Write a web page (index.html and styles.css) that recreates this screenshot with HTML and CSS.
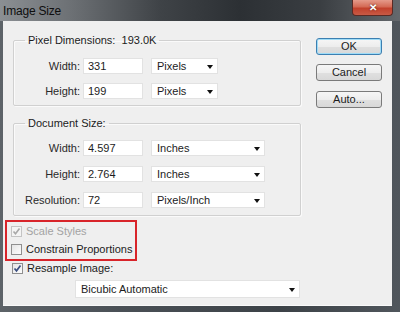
FILE: index.html
```
<!DOCTYPE html>
<html>
<head>
<meta charset="UTF-8">
<title>Image Size</title>
<link rel="stylesheet" href="styles.css">
</head>
<body>
  <div class="window">
    <div class="titlebar">
      <div class="title">Image Size</div>
      <div class="close">&#x2715;</div>
    </div>
    <div class="client">
      <div class="main">
        <fieldset class="group group-pixels">
          <legend>Pixel Dimensions:&nbsp; 193.0K</legend>
          <div class="rows">
            <div class="row">
              <label>Width:</label>
              <input type="text" value="331">
              <div class="select small">Pixels</div>
            </div>
            <div class="row">
              <label>Height:</label>
              <input type="text" value="199">
              <div class="select small">Pixels</div>
            </div>
          </div>
        </fieldset>

        <fieldset class="group group-doc">
          <legend>Document Size:</legend>
          <div class="rows">
            <div class="row">
              <label>Width:</label>
              <input type="text" value="4.597">
              <div class="select">Inches</div>
            </div>
            <div class="row">
              <label>Height:</label>
              <input type="text" value="2.764">
              <div class="select">Inches</div>
            </div>
            <div class="row">
              <label>Resolution:</label>
              <input type="text" value="72">
              <div class="select">Pixels/Inch</div>
            </div>
          </div>
        </fieldset>

        <!-- highlighted options -->
        <div class="highlight">
          <div class="check disabled">
            <span class="box"><svg width="9" height="9" viewBox="0 0 9 9"><path d="M1.5 4.5 L3.5 6.8 L7.5 1.5" fill="none" stroke="#a8a8a8" stroke-width="1.6"/></svg></span>
            <span>Scale Styles</span>
          </div>
          <div class="check">
            <span class="box"></span>
            <span>Constrain Proportions</span>
          </div>
        </div>

        <div class="check resample">
          <span class="box"><svg width="9" height="9" viewBox="0 0 9 9"><path d="M1.5 4.5 L3.5 6.8 L7.5 1.5" fill="none" stroke="#3b4f80" stroke-width="1.7"/></svg></span>
          <span>Resample Image:</span>
        </div>

        <div class="select wide">Bicubic Automatic</div>
      </div>

      <div class="side">
        <button class="btn default">OK</button>
        <button class="btn cancel">Cancel</button>
        <button class="btn auto">Auto...</button>
      </div>
    </div>
  </div>
</body>
</html>
```

FILE: styles.css
```
body {
  margin: 0;
  width: 400px;
  height: 312px;
  overflow: hidden;
  font-family: "Liberation Sans", Arial, sans-serif;
  font-size: 11px;
  color: #1c1c1c;
}

.window {
  display: flex;
  flex-direction: column;
  height: 312px;
  background: linear-gradient(90deg, #5d6368 0%, #4a5056 30%, #3c4247 70%, #50565c 100%);
}

.titlebar {
  height: 21px;
  display: flex;
  justify-content: space-between;
  align-items: flex-start;
  background: linear-gradient(90deg, #8b8f93 0%, #6c7074 18%, #3f4347 40%, #2c3034 60%, #3a3e42 80%, #65696d 100%);
}

.title {
  padding: 4px 0 0 3px;
  font-size: 12px;
  letter-spacing: -0.2px;
  color: #0e0e0e;
}

.close {
  width: 39px;
  height: 15px;
  margin-right: 7px;
  border: 1px solid #5a2a24;
  border-top: none;
  border-radius: 0 0 4px 4px;
  background: linear-gradient(#e59a8a 0%, #d46a55 45%, #c2412c 55%, #c85a45 100%);
  color: #fff;
  font-size: 10px;
  font-weight: bold;
  text-align: center;
  line-height: 15px;
  text-shadow: 0 0 2px #4a1a14;
}

.client {
  flex: 1;
  margin: 0 8px 6px 3px;
  padding: 13px 0 0 2px;
  background: #efefef;
  border-bottom: 1px solid #fafafa;
  display: flex;
}

.main {
  width: 296px;
}

.group {
  margin: 0 0 0 8px;
  width: 288px;
  box-sizing: border-box;
  padding: 11px 0 6px 0;
  border: 1px solid #d0d0d0;
  border-radius: 2px;
  box-shadow: inset 1px 1px 0 #fafafa, 1px 1px 0 #fafafa;
}

.group legend {
  margin-left: 11px;
  padding: 0 3px;
  line-height: 13px;
  color: #1c1c1c;
}

.group-doc {
  margin-top: 11px;
  padding: 10px 0 7px 0;
}

.rows {
  display: flex;
  flex-direction: column;
  gap: 9px;
}

.group-doc .rows {
  gap: 10px;
}

.row {
  display: flex;
  align-items: center;
  height: 16px;
}

.row label {
  width: 66px;
  text-align: right;
  color: #2a2a2a;
}

.row input {
  width: 60px;
  height: 16px;
  box-sizing: border-box;
  margin: 0 0 0 3px;
  padding: 0 4px;
  border: 1px solid #e2e2e2;
  background: #fff;
  font-family: "Liberation Sans", Arial, sans-serif;
  font-size: 11px;
  color: #1c1c1c;
  outline: none;
}

.select {
  position: relative;
  width: 114px;
  height: 16px;
  box-sizing: border-box;
  margin-left: 8px;
  padding-left: 5px;
  border: 1px solid #e2e2e2;
  background: #fff;
  line-height: 14px;
  color: #1c1c1c;
}

/* small arrow on the right */
.select::after {
  content: '';
  position: absolute;
  right: 4px;
  top: 6px;
  border-left: 3px solid transparent;
  border-right: 3px solid transparent;
  border-top: 4px solid #111;
}

.select.small {
  width: 67px;
}

.select.wide {
  width: 225px;
  height: 18px;
  margin: 5px 0 0 70px;
  line-height: 16px;
}

.select.wide::after {
  top: 7px;
}

.highlight {
  width: 132px;
  height: 41px;
  box-sizing: border-box;
  margin-top: 4px;
  padding-left: 4px;
  border: 2px solid #d8242a;
}

.check {
  display: flex;
  align-items: center;
  gap: 4px;
  height: 18px;
}

.check .box {
  width: 11px;
  height: 11px;
  box-sizing: border-box;
  border: 1px solid #8f8f8f;
  background: linear-gradient(135deg, #e4e4e4, #fdfdfd);
  display: flex;
  align-items: center;
  justify-content: center;
}

.check.disabled {
  color: #a3a3a3;
}

.check.disabled .box {
  border-color: #c4c4c4;
  background: #f4f4f4;
}

.check.resample {
  height: 14px;
  margin-left: 7px;
}

.side {
  display: flex;
  flex-direction: column;
  margin-left: 15px;
  padding-top: 4px;
}

.btn {
  width: 66px;
  height: 17px;
  padding: 0;
  border: 1px solid #7a7a7a;
  border-radius: 3px;
  background: linear-gradient(#f6f6f6 0%, #ededed 50%, #e0e0e0 51%, #d8d8d8 100%);
  font-family: "Liberation Sans", Arial, sans-serif;
  font-size: 11px;
  color: #1c1c1c;
  line-height: 15px;
}

.btn.default {
  border-color: #3c7fb1;
  box-shadow: inset 0 0 0 1px #9fdcf7;
}

.btn.cancel {
  margin-top: 9px;
}

.btn.auto {
  margin-top: 10px;
}
```
